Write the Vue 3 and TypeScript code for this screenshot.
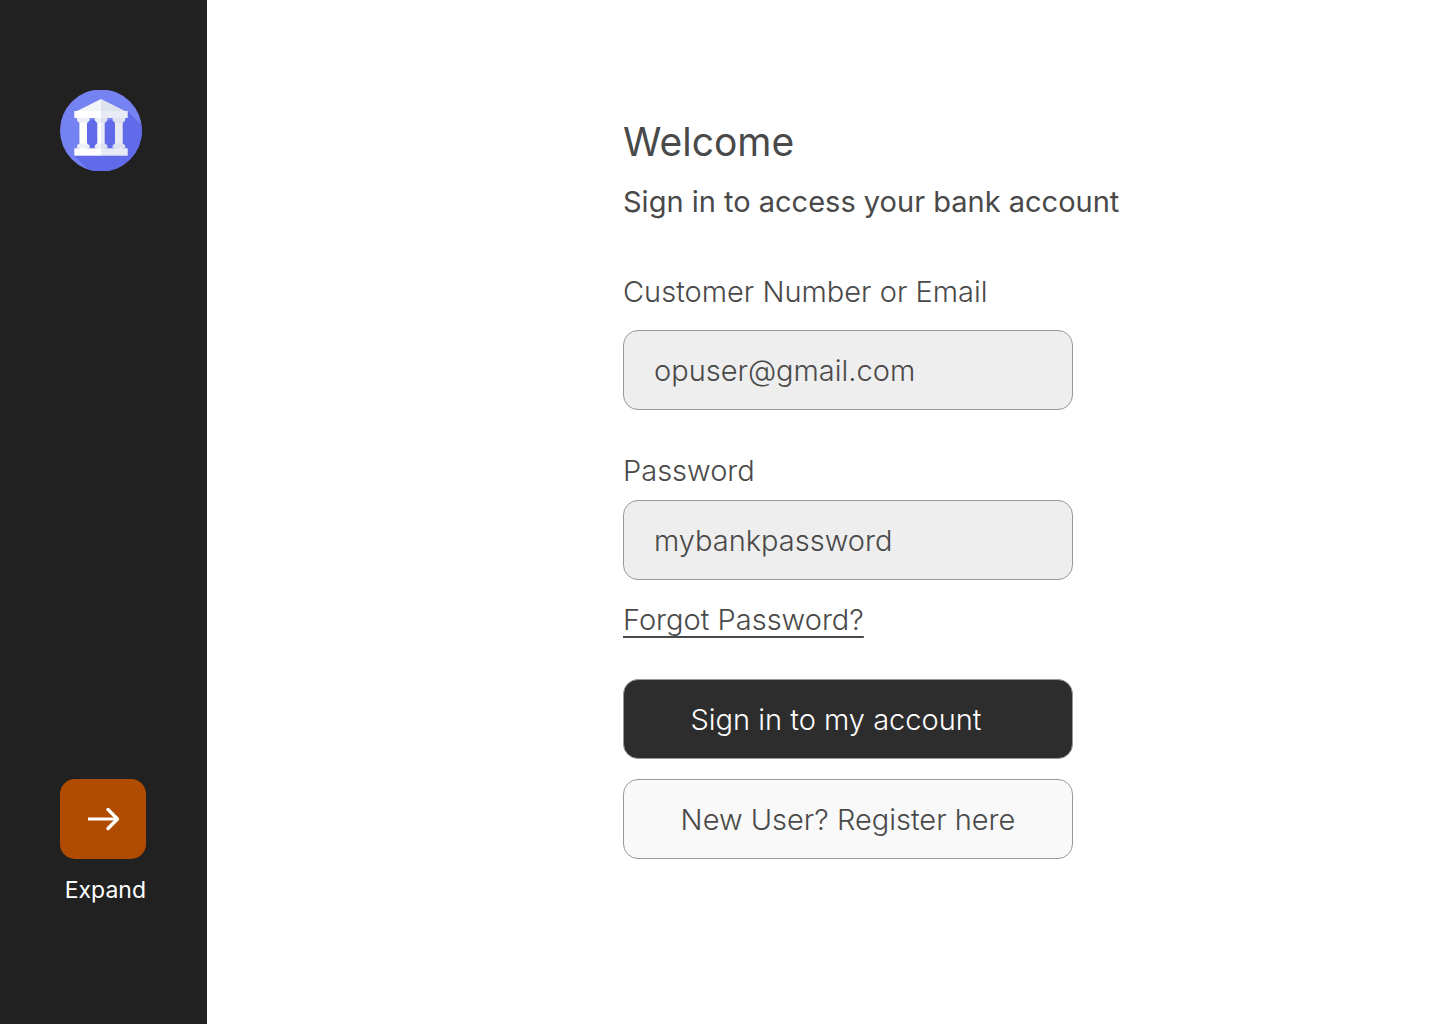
<script setup lang="ts">
import { ref } from 'vue'

const customer = ref('opuser@gmail.com')
const password = ref('mybankpassword')
</script>

<template>
  <div class="page">
    <aside class="sidebar">
      <svg class="logo" viewBox="0 0 82 82" role="img" aria-label="Bank">
        <defs>
          <clipPath id="disc"><ellipse cx="41" cy="40.500" rx="41" ry="41" /></clipPath>
        </defs>
        <g clip-path="url(#disc)">
          <rect width="82" height="81" fill="#7583f2" />
          <path d="M68 21.500L94 47.500V81H29.500L14.500 66L26 30H60Z" fill="#616bea" />
        </g>
        <path d="M41 9L17 21V24H41z" fill="#f2f4fa" />
        <path d="M41 9L65 21V24H41z" fill="#dfe3ee" />
        <g fill="#fff">
          <path d="M19.400 28H27v31h-7.600z" />
          <path d="M37.300 28H41v31h-3.700z" />
          <path d="M14.300 21H41V28H14.300z" />
          <path d="M14.300 58.300H41V65.700H14.300z" />
        </g>
        <g fill="#e8ebf5">
          <path d="M41 28h3.700v31H41z" />
          <path d="M55 28h7.700v31H55z" />
          <path d="M41 21h26.700V28H41z" />
          <path d="M41 58.300h26.700V65.700H41z" />
        </g>
        <path
          d="M17 28H29.600V30.500L27.400 32.700H19.200L17 30.500zM34.800 28H41V32.700H37L34.800 30.500zM19.200 53.400H27.400L29.600 55.600V58.300H17V55.600zM37 53.400H41V58.300H34.800V55.600z"
          fill="#edeff7"
        />
        <path
          d="M41 28H47.400V30.500L45.200 32.700H41zM52.600 28H65.200V30.500L63 32.700H54.800L52.600 30.500zM41 53.400H45.200L47.400 55.600V58.300H41zM54.800 53.400H63L65.200 55.600V58.300H52.600V55.600z"
          fill="#dde1ed"
        />
      </svg>

      <div class="expand">
        <button id="expand" class="expand-button" type="button" aria-labelledby="expand-label">
          <svg width="34" height="24" viewBox="0 0 34 24" fill="none" stroke="#fff" stroke-width="3" aria-hidden="true">
            <path d="M2 12H32" />
            <path d="M22 2.500L31.500 12L22 21.500" stroke-width="3.400" stroke-linecap="round" stroke-linejoin="round" />
          </svg>
        </button>
        <label id="expand-label" class="expand-label" for="expand">Expand</label>
      </div>
    </aside>

    <main class="content">
      <h1 class="title">Welcome</h1>
      <p class="subtitle">Sign in to access your bank account</p>

      <form class="form" @submit.prevent>
        <div class="field field-customer">
          <label for="customer">Customer Number or Email</label>
          <input id="customer" v-model="customer" type="text" autocomplete="username" />
        </div>
        <div class="field field-password">
          <label for="password">Password</label>
          <input id="password" v-model="password" type="text" autocomplete="off" />
        </div>
        <a class="forgot" href="#forgot">Forgot Password?</a>
        <button class="action sign-in" type="submit">Sign in to my account</button>
        <button class="action register" type="button">New User? Register here</button>
      </form>
    </main>
  </div>
</template>

<style>
body {
  margin: 0;
  background: #fff;
}
</style>

<style scoped>
.page {
  display: flex;
  min-height: 100vh;
  color: #494949;
  font-family: Inter, "Liberation Sans", sans-serif;
  font-size: 29px;
  font-weight: 300;
  line-height: 36px;
}

.sidebar {
  display: flex;
  flex: none;
  flex-direction: column;
  align-items: flex-start;
  justify-content: space-between;
  padding: 90px 61px 119px 60px;
  background: #212121;
}

.logo {
  display: block;
  width: 82px;
  height: 82px;
}

.expand {
  display: flex;
  flex-direction: column;
  align-items: flex-end;
  gap: 17px;
}

.expand-button {
  display: flex;
  align-items: center;
  justify-content: center;
  width: 86px;
  height: 80px;
  padding: 0;
  border: 0;
  border-radius: 15px;
  background: #b04b00;
  cursor: pointer;
}

.expand-label {
  color: #fff;
  font-size: 23px;
  font-weight: 400;
  line-height: 29px;
}

.content {
  flex: 1;
  min-width: 0;
  padding: 118px 40px 40px 416px;
}

.title {
  margin: 0;
  font-size: 39px;
  font-weight: 400;
  line-height: 48px;
}

.subtitle {
  margin: 18px 0 0;
  font-weight: 400;
  white-space: nowrap;
}

.form {
  display: flex;
  flex-direction: column;
  align-items: flex-start;
  max-width: 450px;
  margin-top: 54px;
}

.field {
  display: flex;
  flex-direction: column;
  width: 100%;
}

.field-customer {
  gap: 20px;
}

.field-password {
  gap: 11px;
  margin-top: 43px;
}

.field input {
  box-sizing: border-box;
  width: 100%;
  height: 80px;
  padding: 0 30px;
  border: 1px solid #999;
  border-radius: 15px;
  background: #eee;
  color: inherit;
  font: inherit;
}

.forgot {
  margin-top: 22px;
  color: inherit;
  text-decoration-thickness: 2px;
  text-decoration-skip-ink: none;
  text-underline-offset: 6px;
}

.action {
  width: 100%;
  height: 80px;
  padding: 2px 0 0;
  border: 1px solid #999;
  border-radius: 15px;
  font: inherit;
  cursor: pointer;
}

.sign-in {
  margin-top: 41px;
  padding-right: 24px;
  background: #2d2d2d;
  color: #fff;
}

.register {
  margin-top: 20px;
  background: #f9f9f9;
  color: inherit;
}
</style>
